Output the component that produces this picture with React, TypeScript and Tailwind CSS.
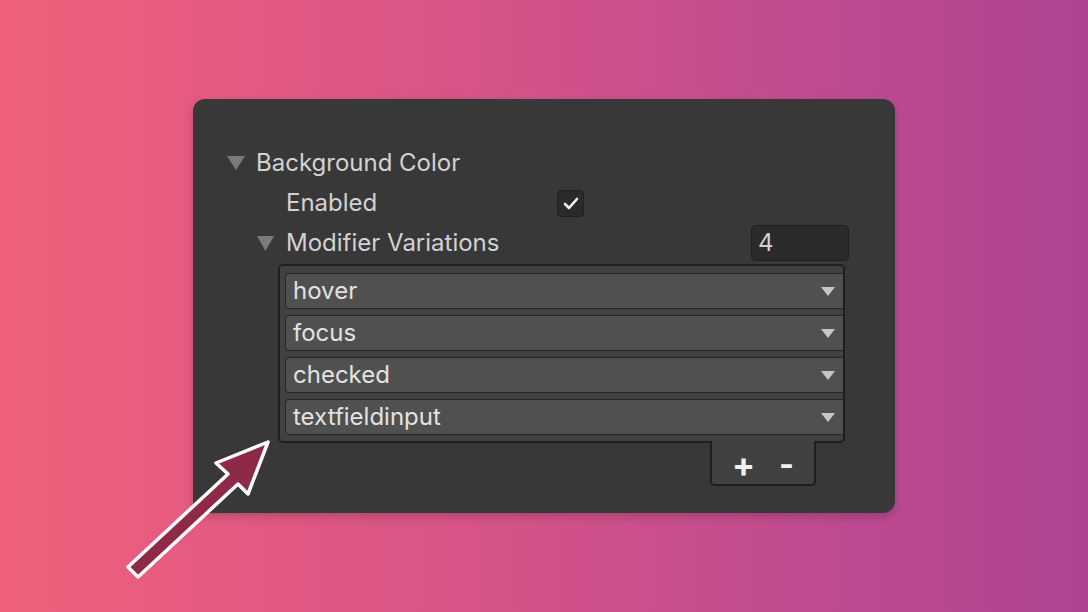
import React from "react";

/* ─── Variation entries ─────────────────────────────────────────────── */
const VARIATIONS = ["hover", "focus", "checked", "textfieldinput"];

/* ─── Small drawings ────────────────────────────────────────────────── */
function Foldout({ w, h }: { w: number; h: number }) {
  return (
    <svg width={w} height={h} viewBox={`0 0 ${w} ${h}`} className="shrink-0">
      <polygon points={`0,0 ${w},0 ${w / 2},${h}`} fill="#7b7b7b" />
    </svg>
  );
}

function DropArrow() {
  return (
    <svg width="14" height="9" viewBox="0 0 14 9" className="shrink-0">
      <polygon points="0,0 14,0 7,9" fill="#c6c6c6" />
    </svg>
  );
}

function Pointer() {
  return (
    <svg
      width="1088"
      height="612"
      viewBox="0 0 1088 612"
      className="absolute left-0 top-0 pointer-events-none"
    >
      <polygon
        points="268,442 216,463 228,474 128,567 138,577 238,484 248,494"
        fill="#8e2a47"
        stroke="#ffffff"
        strokeWidth="3.5"
        strokeLinejoin="round"
      />
    </svg>
  );
}

/* ─── Page ──────────────────────────────────────────────────────────── */
export default function App() {
  return (
    <div
      className="relative w-[1088px] h-[612px] flex items-center justify-center overflow-hidden bg-[linear-gradient(90deg,#f0607a_0%,#d2528a_50%,#ad4494_100%)]"
      style={{ fontFamily: "Inter, 'Noto Sans', sans-serif" }}
    >
      {/* ── Inspector panel ─────────────────────────────────────── */}
      <div className="w-[702px] h-[414px] rounded-[12px] bg-[#383838] shadow-[0_4px_10px_rgba(0,0,0,0.18)] pt-[44px] flex flex-col">
        {/* Background Color */}
        <div className="flex items-center h-[40px] ml-[34px]">
          <Foldout w={18} h={14} />
          <span className="ml-[11px] text-[24px] text-[#d2d2d2] leading-none">Background Color</span>
        </div>

        {/* Enabled */}
        <div className="flex items-center h-[40px] ml-[93px]">
          <span className="w-[271px] text-[24px] text-[#d2d2d2] leading-none">Enabled</span>
          <div className="w-[27px] h-[27px] rounded-[4px] bg-[#2a2a2a] border border-[#202020] flex items-center justify-center">
            <svg width="16" height="13" viewBox="0 0 16 13">
              <polyline
                points="2,7 6,11 14,2"
                fill="none"
                stroke="#f2f2f2"
                strokeWidth="2.6"
                strokeLinecap="round"
                strokeLinejoin="round"
              />
            </svg>
          </div>
        </div>

        {/* Modifier Variations */}
        <div className="flex items-center h-[40px] ml-[64px] mr-[46px]">
          <Foldout w={17} h={15} />
          <span className="ml-[12px] flex-1 text-[24px] text-[#d2d2d2] leading-none">
            Modifier Variations
          </span>
          <div className="w-[98px] h-[36px] rounded-[5px] bg-[#2a2a2a] border border-[#1e1e1e] flex items-center pl-[6px] text-[24px] text-[#d2d2d2]">
            4
          </div>
        </div>

        {/* List */}
        <div className="ml-[85px] mr-[50px] mt-[1px] rounded-[5px] border-2 border-[#1f1f1f] bg-[#414141] overflow-hidden pt-[7px] pb-[6px] pl-[5px] flex flex-col gap-[6px]">
          {VARIATIONS.map((v) => (
            <div
              key={v}
              className="h-[36px] rounded-l-[4px] border border-r-0 border-[#262626] bg-[#505050] flex items-center pl-[7px] pr-[8px]"
            >
              <span className="flex-1 text-[24px] text-[#e2e2e2] leading-none">{v}</span>
              <DropArrow />
            </div>
          ))}
        </div>

        {/* Add / remove */}
        <div className="flex justify-end mr-[79px] -mt-[2px]">
          <div className="w-[106px] h-[45px] rounded-b-[5px] border-2 border-t-0 border-[#1f1f1f] bg-[#414141] flex items-center justify-center gap-[24px] pt-[4px]">
            <span className="text-[34px] font-bold text-[#f0f0f0] leading-none">+</span>
            <span className="text-[32px] font-bold text-[#f0f0f0] leading-none">-</span>
          </div>
        </div>
      </div>

      <Pointer />
    </div>
  );
}
